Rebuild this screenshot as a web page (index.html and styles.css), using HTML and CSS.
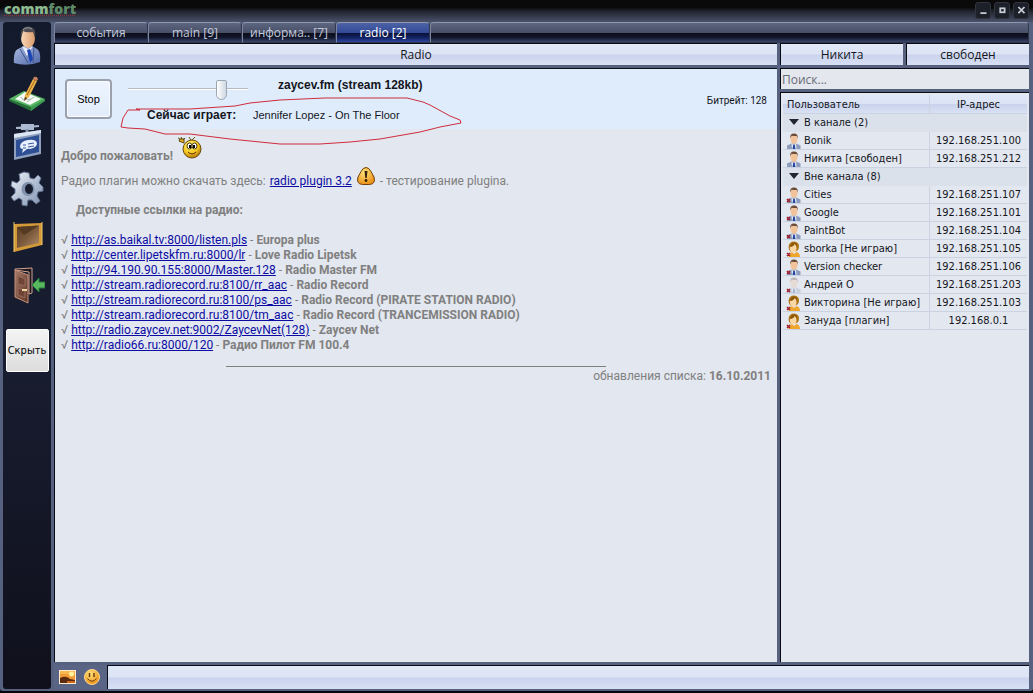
FILE: index.html
```
<!DOCTYPE html>
<html lang="ru">
<head>
<meta charset="utf-8">
<title>CommFort</title>
<link rel="stylesheet" href="styles.css">
</head>
<body>
<svg class="defs" aria-hidden="true">
  <defs>
    <linearGradient id="suit" x1="0" y1="0" x2="1" y2="1"><stop offset="0" stop-color="#a9b9e0"/><stop offset="1" stop-color="#5068a8"/></linearGradient>
    <linearGradient id="skin" x1="0" y1="0" x2="1" y2="0"><stop offset="0" stop-color="#fbd9b8"/><stop offset="1" stop-color="#d99a6c"/></linearGradient>
    <linearGradient id="steel" x1="0" y1="0" x2="1" y2="1"><stop offset="0" stop-color="#eef3fb"/><stop offset="1" stop-color="#7d8fae"/></linearGradient>
    <linearGradient id="wood" x1="0" y1="0" x2="1" y2="1"><stop offset="0" stop-color="#5e4026"/><stop offset="0.5" stop-color="#7b5a3c"/><stop offset="1" stop-color="#b48d68"/></linearGradient>
    <linearGradient id="door" x1="0" y1="0" x2="1" y2="1"><stop offset="0" stop-color="#a87c68"/><stop offset="1" stop-color="#5a3428"/></linearGradient>
    <linearGradient id="thumb" x1="0" y1="0" x2="1" y2="0"><stop offset="0" stop-color="#fff"/><stop offset="1" stop-color="#cfd8e2"/></linearGradient>
    <radialGradient id="face" cx="0.4" cy="0.3" r="0.7"><stop offset="0" stop-color="#fff27a"/><stop offset="0.6" stop-color="#f7c81e"/><stop offset="1" stop-color="#b87a08"/></radialGradient>
    <radialGradient id="orange" cx="0.4" cy="0.3" r="0.8"><stop offset="0" stop-color="#ffe27a"/><stop offset="1" stop-color="#e8860c"/></radialGradient>
    <symbol id="man" viewBox="0 0 16 16">
      <path d="M1 16V12.500L5.500 10.500H10L14.500 12.500V16Z" fill="#8d9cba"/>
      <path d="M5.500 10.500L8 12.500 10 10.500 10.500 16H6Z" fill="#e4eaf5"/>
      <path d="M7.200 12H8.800L9.500 16H6.500Z" fill="#2548a0"/>
      <ellipse cx="8" cy="6" rx="3.500" ry="5" fill="#f1c39b"/>
      <path d="M4.300 5.500Q3.600 0.500 8 0.500 12.300 0.500 11.700 5.500L10.800 3Q7 3 5.500 2.800Z" fill="#6b4c3a"/>
    </symbol>
    <symbol id="woman" viewBox="0 0 16 16">
      <path d="M2.500 6Q3 0.500 8 0.500 13.500 1 13 6 13 8.500 11 10L5 11Q2.500 9 2.500 6Z" fill="#b07414"/>
      <path d="M2.500 16Q3 12 6 11L8 13 10.500 11Q14 12 14 16Z" fill="#f0a52c"/>
      <ellipse cx="7.200" cy="7" rx="3.300" ry="4.500" fill="#fbd7a6"/>
      <path d="M4 6Q8 5.500 8.500 3 10.500 4 11 6.500 12 2 8 1.500 4 2 4 6Z" fill="#8a5608"/>
    </symbol>
    <symbol id="off" viewBox="0 0 16 16"><path d="M1 12L4 15M4 12L1 15" stroke="#a01c2c" stroke-width="1.500"/></symbol>
  </defs>
</svg>

<div class="window">
  <header class="titlebar">
    <h1 class="logo">comm<span>fort</span></h1>
    <div class="winbtns">
      <button type="button" aria-label="Свернуть"><svg viewBox="0 0 16 16"><path d="M5 11H12" stroke="#c8ccd8" stroke-width="2"/></svg></button>
      <button type="button" aria-label="Развернуть"><svg viewBox="0 0 16 16"><rect x="6" y="5.500" width="5" height="4.500" fill="none" stroke="#c8ccd8" stroke-width="2"/></svg></button>
      <button type="button" aria-label="Закрыть"><svg viewBox="0 0 16 16"><path d="M5 4L12 11M12 4L5 11" stroke="#c8ccd8" stroke-width="2"/></svg></button>
    </div>
  </header>

  <div class="body">
    <nav class="sidebar">
      <button type="button" aria-label="Профиль"><svg viewBox="0 0 36 40">
        <path d="M5 38Q4 26 9 24L15 21H23L28 24Q32 26 31 37Q18 42 5 38Z" fill="url(#suit)"/>
        <path d="M13 21L18 31 24 21 19 24Z" fill="#e9eefc"/><path d="M18 25L21 24 24 34 21 38Z" fill="#1b45b5"/>
        <path d="M11 24L19 38M25 22L24 38" stroke="#40568f" fill="none"/>
        <ellipse cx="19" cy="13" rx="7" ry="10" fill="url(#skin)"/>
        <path d="M12 14Q10 2 19 1.500 28 2 26 13L24 7Q17 8 14 6Z" fill="#4e4c50"/><path d="M14 5Q18 1 23 4" stroke="#989aa2" fill="none"/>
      </svg></button>
      <button type="button" aria-label="Сообщение"><svg viewBox="0 0 36 40">
        <path d="M0 26L15 18 36 26 22 37Z" fill="#5bb765"/><path d="M0 26L22 34V38L0 28Z" fill="#26733a"/><path d="M22 34L36 26V28L22 38Z" fill="#3c9950"/>
        <path d="M6 26L16 19 32 26 21 32Z" fill="#f4faf4"/><path d="M12 24L14 27 22 26M18 29L25 24" stroke="#a8b8b2" fill="none"/>
        <path d="M15 28L16 22 24 6 28 8 20 24Z" fill="#edb54a"/><path d="M18 22L26 7" stroke="#9c6416"/><path d="M24 6L25 4Q28 3 29 6L28 8Z" fill="#c98060"/><path d="M15 28L16 24 18 25Z" fill="#3b2a1e"/>
      </svg></button>
      <button type="button" aria-label="Каналы"><svg viewBox="0 0 36 40">
        <path d="M7 7L30 5M13 4H24V8H13Z" stroke="#aab9cf" stroke-width="2" fill="#dfe7f2"/><path d="M18 8V12" stroke="#8796b0" stroke-width="3"/>
        <path d="M5 13L32 9V33L5 39Z" fill="#8ea0bf"/><path d="M5 13L32 9V12L5 17Z" fill="#dde6f4"/>
        <path d="M7 19L30 14V31L7 36Z" fill="#2f4f94"/><path d="M11 25Q12 20 19 19 28 18 28 23 27 28 18 28L13 32 14 28Q11 28 11 25Z" fill="#e8f0ff"/>
        <path d="M14 24H17M19 23L25 22M19 26L25 25M14 27H17" stroke="#3a549a"/>
      </svg></button>
      <button type="button" aria-label="Настройки"><svg viewBox="0 0 36 40">
        <g fill="url(#steel)"><path d="M15 3L20 4 21 9 25 10 29 6 32 9 30 14 34 18 34 22 29 23 28 27 31 32 27 35 23 31 19 31 18 37 13 36 13 31 10 29 5 32 2 28 6 24 6 20 2 17 3 12 8 14 11 11 10 5Z" stroke="#60718f"/></g>
        <ellipse cx="19" cy="20" rx="6.500" ry="7" fill="#8191ad"/><ellipse cx="20" cy="20" rx="4" ry="5" fill="#161c2e"/>
      </svg></button>
      <button type="button" aria-label="Доска"><svg viewBox="0 0 36 40">
        <path d="M5 7L33 6V28L5 35Z" fill="#d39a3a"/><path d="M8 10L30 8.500V26L8 31Z" fill="url(#wood)"/><path d="M8 10L30 8.500 15 18Z" fill="#543a22"/><path d="M5 5V35M33 5V28" stroke="#f1c76a"/>
      </svg></button>
      <button type="button" aria-label="Выход"><svg viewBox="0 0 36 40">
        <path d="M6 4L23 3V28L20 29V7L6 5Z" fill="#1d1720" stroke="#d3a48f"/><path d="M6 5L19 10V38L6 32Z" fill="url(#door)" stroke="#c89078"/>
        <path d="M9 11L16 14V21L9 19ZM9 23L16 25V33L9 30Z" fill="#6f4436" stroke="#9a6a58"/><path d="M13 25H18" stroke="#f0d8a0" stroke-width="2"/>
        <path d="M23 20L30 13V17H36V23H30V27Z" fill="#58b860" stroke="#267a3a"/>
      </svg></button>
      <button type="button" class="hide">Скрыть</button>
    </nav>

    <main class="main">
      <div class="tabs" role="tablist">
        <button type="button" role="tab">события</button>
        <button type="button" role="tab">main [9]</button>
        <button type="button" role="tab">информа.. [7]</button>
        <button type="button" role="tab" aria-selected="true" class="active">radio [2]</button>
        <div class="rest"></div>
      </div>

      <div class="columns">
        <section class="channel">
          <h2 class="bar">Radio</h2>
          <div class="chat">
            <div class="player">
              <button type="button" class="stop">Stop</button>
              <input class="volume" type="range" min="0" max="100" value="81" aria-label="Громкость">
              <strong class="station">zaycev.fm (stream 128kb)</strong>
              <strong class="now">Сейчас играет:</strong>
              <span class="song">Jennifer Lopez - On The Floor</span>
              <span class="bitrate">Битрейт: 128</span>
              <svg class="mark" viewBox="0 0 345 50" aria-hidden="true"><path d="M16 13L20 14 8 14 3 22 1 31 8 32 25 33 45 38 70 38 110 43 160 48H200L230 46 260 43 300 36 320 31 341 27 340 24 330 20 310 9 303 6 287 2H205L160 4 130 7 115 10 70 13H16" fill="none" stroke="#cf2c3c"/></svg>
            </div>
            <div class="post">
              <p class="hello"><b>Добро пожаловать!</b>
                <svg class="wave" viewBox="0 0 26 24" role="img" aria-label="Привет">
                  <path d="M14 4L12 1M15 4L18 1" stroke="#6b5312"/><circle cx="15" cy="13" r="9" fill="url(#face)" stroke="#694a0c"/>
                  <path d="M1 2L3 3M4 1L5 3M8 2L6 4M2 5L7 7 7 3 3 3Z" stroke="#5c4310" fill="#e9b51c"/>
                  <ellipse cx="12.500" cy="10" rx="2.500" ry="3" fill="#fff" stroke="#4d3a10"/><ellipse cx="17.500" cy="10" rx="2.500" ry="3" fill="#fff" stroke="#4d3a10"/>
                  <path d="M13 9V12M17 9V12" stroke="#000" stroke-width="2"/><path d="M11 16Q15 20 19 16" stroke="#5b2c08" fill="none"/>
                </svg></p>
              <p class="plugin">Радио плагин можно скачать здесь: <a href="#">radio plugin 3.2</a>
                <svg class="warn" viewBox="0 0 20 20" role="img" aria-label="Внимание"><path d="M10 1.500Q13 1.500 15 5.500L18 11Q20 18 13.500 18.500H6.500Q0 18 2 11L5 5.500Q7 1.500 10 1.500Z" fill="url(#orange)" stroke="#70410a"/><path d="M8.500 5H11.500L10.700 12H9.300Z" fill="#31200c"/><circle cx="10" cy="14.500" r="1.400" fill="#31200c"/></svg>
                - тестирование plugina.</p>
              <h3>Доступные ссылки на радио:</h3>
              <ul class="links">
                <li>√ <a href="#">http://as.baikal.tv:8000/listen.pls</a> - <b>Europa plus</b></li>
                <li>√ <a href="#">http://center.lipetskfm.ru:8000/lr</a> - <b>Love Radio Lipetsk</b></li>
                <li>√ <a href="#">http://94.190.90.155:8000/Master.128</a> - <b>Radio Master FM</b></li>
                <li>√ <a href="#">http://stream.radiorecord.ru:8100/rr_aac</a> - <b>Radio Record</b></li>
                <li>√ <a href="#">http://stream.radiorecord.ru:8100/ps_aac</a> - <b>Radio Record (PIRATE STATION RADIO)</b></li>
                <li>√ <a href="#">http://stream.radiorecord.ru:8100/tm_aac</a> - <b>Radio Record (TRANCEMISSION RADIO)</b></li>
                <li>√ <a href="#">http://radio.zaycev.net:9002/ZaycevNet(128)</a> - <b>Zaycev Net</b></li>
                <li>√ <a href="#">http://radio66.ru:8000/120</a> - <b>Радио Пилот FM 100.4</b></li>
              </ul>
              <hr>
              <p class="updated">обнавления списка: <b>16.10.2011</b></p>
            </div>
          </div>
        </section>

        <aside class="people">
          <div class="status">
            <button type="button" class="bar">Никита</button>
            <button type="button" class="bar">свободен</button>
          </div>
          <input class="search" type="search" placeholder="Поиск..." aria-label="Поиск">
          <div class="list">
            <table>
              <thead><tr><th class="user">Пользователь</th><th>IP-адрес</th></tr></thead>
              <tbody>
                <tr class="group"><td colspan="2"><i></i>В канале (2)</td></tr>
                <tr><td><svg><use href="#man"/></svg>Bonik</td><td>192.168.251.100</td></tr>
                <tr><td><svg><use href="#man"/></svg>Никита [свободен]</td><td>192.168.251.212</td></tr>
                <tr class="group"><td colspan="2"><i></i>Вне канала (8)</td></tr>
                <tr><td><svg><use href="#man"/><use href="#off"/></svg>Cities</td><td>192.168.251.107</td></tr>
                <tr><td><svg><use href="#man"/><use href="#off"/></svg>Google</td><td>192.168.251.101</td></tr>
                <tr><td><svg><use href="#man"/><use href="#off"/></svg>PaintBot</td><td>192.168.251.104</td></tr>
                <tr><td><svg><use href="#woman"/><use href="#off"/></svg>sborka [Не играю]</td><td>192.168.251.105</td></tr>
                <tr><td><svg><use href="#man"/><use href="#off"/></svg>Version checker</td><td>192.168.251.106</td></tr>
                <tr><td><svg><use href="#man" opacity="0.300"/><use href="#off"/></svg>Андрей О</td><td>192.168.251.203</td></tr>
                <tr><td><svg><use href="#woman"/><use href="#off"/></svg>Викторина [Не играю]</td><td>192.168.251.103</td></tr>
                <tr><td><svg><use href="#woman"/><use href="#off"/></svg>Зануда [плагин]</td><td>192.168.0.1</td></tr>
              </tbody>
            </table>
          </div>
        </aside>
      </div>

      <footer class="compose">
        <button type="button" aria-label="Картинка"><svg viewBox="0 0 18 16"><rect x="0.500" y="1.500" width="16" height="13" fill="#f29a35" stroke="#ffe9cf"/><rect x="1" y="2" width="15" height="3" fill="#f8b850"/><circle cx="12.500" cy="5" r="2.500" fill="#fff29a"/><path d="M1 9Q7 6 11 10L16 11V14H1Z" fill="#5a2a10"/><path d="M8 12H16V14H8Z" fill="#d0661c"/></svg></button>
        <button type="button" aria-label="Смайлы"><svg viewBox="0 0 18 16"><circle cx="9" cy="8" r="7.500" fill="url(#orange)" stroke="#ffd98a"/><path d="M6.500 4V8M11 4V8" stroke="#6b3a08" stroke-width="1.500"/><path d="M4.500 9.500Q9 15 13.500 9.500" stroke="#6b3a08" fill="none"/></svg></button>
        <input type="text" aria-label="Сообщение">
      </footer>
    </main>
  </div>
</div>
</body>
</html>
```
FILE: styles.css
```
* { box-sizing: border-box; }

body {
  margin: 0;
  background: #05060a;
  font-family: "Open Sans", "Noto Sans", sans-serif;
  font-size: 12px;
  color: #14161c;
}

button, input { font: inherit; color: inherit; margin: 0; border-radius: 0; }
button { padding: 0; border: 0; background: none; cursor: pointer; }
h1, h2, h3, p, ul { margin: 0; padding: 0; font-weight: normal; }
.defs { position: absolute; width: 0; height: 0; }

.window {
  display: flex;
  flex-direction: column;
  height: 100vh;
  padding: 0 4px 2px 3px;
  border-bottom: 2px solid #05060a;
  border-radius: 4px;
  background: #56607f;
}

/* Title bar */
.titlebar {
  display: flex;
  justify-content: space-between;
  align-items: flex-start;
  height: 22px;
  margin: 0 -4px 0 -3px;
  padding: 0 4px;
  background: linear-gradient(#0a0a0a 0 35%, #20242f 50%, #4a526a);
}
.logo {
  font: 800 14px/18px "Open Sans", sans-serif;
  color: #8eba90;
  text-decoration: underline dotted #8c3434;
}
.logo span { color: #5f8a68; }
.winbtns { display: flex; gap: 3px; padding-top: 2px; }
.winbtns button {
  width: 16px;
  height: 17px;
  border: 1px solid #30343f;
  border-radius: 3px;
  background: #1d2029;
}
.winbtns svg { display: block; width: 14px; height: 15px; }

.body { display: flex; flex: 1; min-height: 0; gap: 3px; }

/* Sidebar */
.sidebar {
  display: flex;
  flex-direction: column;
  align-items: center;
  gap: 8px;
  width: 48px;
  padding: 3px 2px;
  border-radius: 3px;
  background: linear-gradient(#131a2c, #181d30 50%, #10101c);
}
.sidebar svg { display: block; width: 36px; height: 40px; }
.sidebar .hide {
  width: 43px;
  height: 43px;
  margin-top: 16px;
  border: 1px solid #fff;
  border-radius: 2px;
  background: linear-gradient(#f4f4f4, #dcdcdc);
  font: 11px "DejaVu Sans Condensed", "DejaVu Sans", sans-serif;
  color: #000;
}

/* Main area */
.main { display: flex; flex-direction: column; flex: 1; min-width: 0; gap: 3px; }
.tabs { display: flex; height: 21px; margin-bottom: -3px; }
.tabs > * {
  border: 1px solid #7c859f;
  border-color: #8f97ae #30364c #30364c #7c859f;
  border-radius: 4px 4px 0 0;
  background: linear-gradient(#5d6680, #484f67 50%, #0c0e1a 55%, #11152b 75%, #3a4569);
}
.tabs button { width: 94px; font-size: 12px; line-height: 17px; color: #c3cadb; }
.tabs .active {
  background: linear-gradient(#4d62a6, #334b98 50%, #0a1238 55%, #14256a 80%, #3048a0);
  color: #fff;
}
.tabs .rest { flex: 1; }

.columns { display: flex; flex: 1; min-height: 0; gap: 3px; }
.channel, .people { display: flex; flex-direction: column; gap: 3px; min-width: 0; }
.channel { flex: 1; }
.people { width: 249px; }

.bar, .chat, .search, .list, .compose input {
  border: 0 solid #080a14;
  border-width: 1px 0 0 1px;
}
.bar {
  height: 22px;
  background: linear-gradient(#e0e8f7, #dbe3f5 48%, #cad3ec 52%, #d7e0f4);
  font-size: 12px;
  line-height: 22px;
  text-align: center;
}
.status { display: flex; gap: 3px; }
.status .bar { flex: 1; }

.chat { flex: 1; min-height: 0; overflow: hidden; background: #e3e7ef; }

/* Radio player */
.player {
  position: relative;
  display: grid;
  grid-template-columns: 48px 120px auto 1fr;
  grid-template-rows: 32px 28px;
  align-items: center;
  padding: 0 10px;
  background: #dfecfc;
  font-family: "Liberation Sans", Arial, sans-serif;
}
.stop {
  grid-row: 1 / 3;
  width: 47px;
  height: 40px;
  border: 2px solid #9aa1ac;
  border-radius: 4px;
  background: linear-gradient(#edf4ff, #e2ecfa);
  box-shadow: inset 0 0 0 1px #f8fbff;
  font-size: 11px;
  color: #000;
}
.volume {
  width: 120px;
  height: 24px;
  margin: 8px 0 0 15px;
  appearance: none;
  background: none;
}
.volume::-webkit-slider-runnable-track {
  height: 2px;
  border-top: 1px solid #b5bcc6;
  background: #fff;
}
.volume::-webkit-slider-thumb {
  appearance: none;
  width: 11px;
  height: 20px;
  margin-top: -9px;
  border: 1px solid #9aa5b2;
  border-radius: 2px 2px 6px 6px;
  background: linear-gradient(90deg, #fff, #cfd8e2);
}
.station { grid-column: 3; margin-left: 45px; white-space: nowrap; }
.now { grid-column: 2 / 4; grid-row: 2; margin-left: 34px; }
.song { grid-column: 2 / 4; grid-row: 2; margin-left: 140px; font-size: 11px; white-space: nowrap; }
.bitrate { grid-column: 4; grid-row: 1 / 3; justify-self: end; margin-top: 2px; font-family: Roboto, sans-serif; font-size: 10px; }
.mark {
  position: absolute;
  left: 65px;
  top: 27px;
  width: 345px;
  height: 50px;
  pointer-events: none;
}

/* Channel greeting */
.post {
  padding: 8px 6px;
  color: #808080;
  font-family: Roboto, "Open Sans", sans-serif;
  line-height: 15px;
}
.post b, .post h3 { font-weight: bold; }
.post a { color: #0c0ca4; }
.hello { display: flex; align-items: flex-end; height: 27px; }
.wave { width: 26px; height: 24px; margin: 0 0 4px 4px; }
.plugin { display: flex; align-items: center; gap: 4px; margin-top: 5px; height: 24px; white-space: nowrap; }
.warn { width: 20px; height: 20px; margin-bottom: 10px; }
.post h3 { margin: 10px 0 15px 15px; font-size: 12px; }
.links { list-style: none; white-space: nowrap; }
.post hr { width: 380px; margin: 13px 0 0 165px; border: 0; border-top: 1px solid #808080; }
.updated { margin-top: 2px; text-align: right; }

/* User list */
.search {
  width: 100%;
  height: 21px;
  padding: 0 1px;
  outline: 0;
  appearance: none;
  background: #e4e7ee;
  font-size: 12px;
}
.search::placeholder { color: #666b76; opacity: 1; }
.list {
  flex: 1;
  padding: 2px;
  background: #e3e7ef;
  font: 11px/17px "DejaVu Sans Condensed", "DejaVu Sans", sans-serif;
}
.list table { width: 100%; border-spacing: 0; table-layout: fixed; }
.list th, .list td {
  height: 18px;
  padding: 0;
  border-bottom: 1px solid #cbd3e2;
  text-align: center;
  white-space: nowrap;
}
.list th {
  height: 19px;
  padding-top: 1px;
  font-weight: normal;
  background: linear-gradient(#e0e8f7, #dbe3f5 48%, #cad3ec 52%, #d7e0f4);
}
.list .user { width: 147px; padding-left: 4px; }
.list th:first-child, .list td:first-child { text-align: left; border-right: 1px solid #cbd3e2; }
.list .group td { background: #dbe1eb; border-right: 0; border-bottom-color: #dbe1eb; }
.list .group i {
  display: inline-block;
  margin: 0 5px 1px 6px;
  border: 5px solid transparent;
  border-top: 6px solid #20252f;
  border-bottom: 0;
}
.list svg { width: 16px; height: 16px; margin: 0 2px 0 3px; vertical-align: middle; }

/* Message box */
.compose {
  display: flex;
  align-items: stretch;
  height: 24px;
  background: #5a6586;
}
.compose button { width: 18px; margin-left: 5px; }
.compose button + button { margin: 0 6px 0 6px; }
.compose svg { display: block; width: 18px; height: 16px; }
.compose input {
  flex: 1;
  min-width: 0;
  padding: 0 4px;
  outline: 0;
  background: linear-gradient(#e0e8f7, #dbe3f5 48%, #cad3ec 52%, #d7e0f4);
}
```
